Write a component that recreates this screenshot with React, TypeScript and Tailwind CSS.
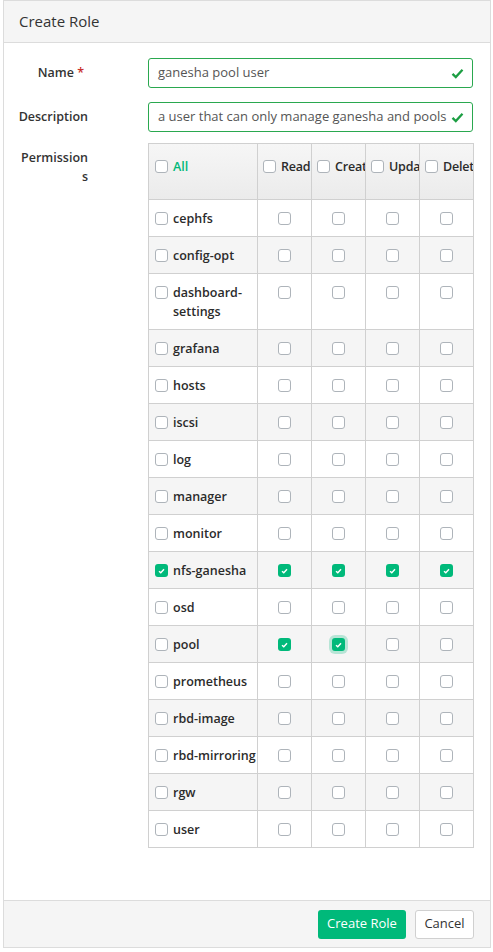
import React from "react";

type Perm = {
  name: string;
  all: boolean;
  read: boolean;
  create: boolean;
  update: boolean;
  del: boolean;
  focus?: boolean;
};

const scopes: Perm[] = [
  { name: "cephfs", all: false, read: false, create: false, update: false, del: false },
  { name: "config-opt", all: false, read: false, create: false, update: false, del: false },
  { name: "dashboard-settings", all: false, read: false, create: false, update: false, del: false },
  { name: "grafana", all: false, read: false, create: false, update: false, del: false },
  { name: "hosts", all: false, read: false, create: false, update: false, del: false },
  { name: "iscsi", all: false, read: false, create: false, update: false, del: false },
  { name: "log", all: false, read: false, create: false, update: false, del: false },
  { name: "manager", all: false, read: false, create: false, update: false, del: false },
  { name: "monitor", all: false, read: false, create: false, update: false, del: false },
  { name: "nfs-ganesha", all: true, read: true, create: true, update: true, del: true },
  { name: "osd", all: false, read: false, create: false, update: false, del: false },
  { name: "pool", all: false, read: true, create: true, update: false, del: false, focus: true },
  { name: "prometheus", all: false, read: false, create: false, update: false, del: false },
  { name: "rbd-image", all: false, read: false, create: false, update: false, del: false },
  { name: "rbd-mirroring", all: false, read: false, create: false, update: false, del: false },
  { name: "rgw", all: false, read: false, create: false, update: false, del: false },
  { name: "user", all: false, read: false, create: false, update: false, del: false },
];

function Box({ checked, focus }: { checked?: boolean; focus?: boolean }) {
  if (checked) {
    return (
      <span
        className={
          "flex h-[13px] w-[13px] shrink-0 items-center justify-center rounded-[3px] bg-[#00b97a] " +
          (focus ? "shadow-[0_0_0_3px_rgba(0,185,122,0.25)]" : "")
        }
      >
        <svg width="7" height="6" viewBox="0 0 7 6">
          <path d="M1 3.2 L2.8 4.8 L6 1.2" fill="none" stroke="#fff" strokeWidth="1.4" />
        </svg>
      </span>
    );
  }
  return <span className="block h-[13px] w-[13px] shrink-0 rounded-[3px] border border-[#aeb4ba] bg-white" />;
}

function ValidCheck() {
  return (
    <svg width="13" height="11" viewBox="0 0 13 11" className="shrink-0">
      <path d="M1.5 5.8 L4.8 9 L11.5 1.8" fill="none" stroke="#1c9e43" strokeWidth="2.3" />
    </svg>
  );
}

export default function App() {
  const cols = ["Read", "Create", "Update", "Delete"];
  return (
    <div className="min-h-[952px] bg-white px-[3px]" style={{ fontFamily: '"Open Sans", "Liberation Sans", sans-serif' }}>
      <div className="flex h-[948px] w-[488px] flex-col border border-[#dcdcdc]">
        <div className="flex h-[42px] shrink-0 items-center border-b border-[#dcdcdc] bg-[#f5f5f5] px-[15px] text-[15px] text-[#333]">
          Create Role
        </div>

        <div className="flex flex-1 flex-col pt-[15px]">
          <div className="flex items-center">
            <div className="w-[84px] pr-[4px] text-right text-[12.5px] font-semibold text-[#333]">
              Name <span className="text-[#c9302c]">*</span>
            </div>
            <div className="ml-[60px] flex h-[30px] w-[325px] items-center justify-between rounded-[3px] border border-[#2aa84f] pl-[9px] pr-[8px] text-[13px] text-[#555]">
              <span>ganesha pool user</span>
              <ValidCheck />
            </div>
          </div>

          <div className="mt-[14px] flex items-center">
            <div className="w-[84px] text-right text-[12.5px] font-semibold text-[#333]">Description</div>
            <div className="ml-[60px] flex h-[30px] w-[325px] items-center justify-between rounded-[3px] border border-[#2aa84f] pl-[9px] pr-[8px] text-[13px] text-[#555]">
              <span className="whitespace-nowrap">a user that can only manage ganesha and pools</span>
              <ValidCheck />
            </div>
          </div>

          <div className="mt-[11px] flex items-start">
            <div className="w-[84px] pt-[5px] text-right text-[12.5px] font-semibold leading-[19px] text-[#333]">
              Permission
              <br />s
            </div>
            <table className="ml-[60px] w-[325px] table-fixed border-collapse text-[12.5px] font-semibold leading-[19px] text-[#2b2b2b]">
              <colgroup>
                <col className="w-[109px]" />
                <col className="w-[54px]" />
                <col className="w-[54px]" />
                <col className="w-[54px]" />
                <col className="w-[54px]" />
              </colgroup>
              <thead>
                <tr className="h-[56px] bg-gradient-to-b from-[#f6f6f6] to-[#ebebeb]">
                  <th className="border border-[#d0d0d0] px-[6px] pb-[11px] text-left font-semibold">
                    <div className="flex items-center gap-[5px] text-[#00b97a]">
                      <Box /> All
                    </div>
                  </th>
                  {cols.map((c) => (
                    <th key={c} className="overflow-hidden border border-[#d0d0d0] pb-[11px] pl-[5px] pr-0 text-left font-semibold">
                      <div className="flex items-center gap-[5px] overflow-hidden whitespace-nowrap tracking-[-0.2px]">
                        <Box /> {c}
                      </div>
                    </th>
                  ))}
                </tr>
              </thead>
              <tbody>
                {scopes.map((s, i) => (
                  <tr key={s.name} className={i % 2 === 1 ? "bg-[#f5f5f5]" : "bg-white"}>
                    <td className="border border-[#d0d0d0] px-[6px] pb-[8px] pt-[9px] align-top">
                      <div className="flex items-start gap-[5px]">
                        <div className="flex h-[19px] items-center">
                          <Box checked={s.all} />
                        </div>
                        <div className="whitespace-nowrap">
                          {s.name === "dashboard-settings" ? <>dashboard-<br />settings</> : s.name}
                        </div>
                      </div>
                    </td>
                    {[s.read, s.create, s.update, s.del].map((v, j) => (
                      <td key={j} className="border border-[#d0d0d0] pb-[8px] pt-[9px] align-top">
                        <div className="flex h-[19px] items-center justify-center">
                          <Box checked={v} focus={s.focus && j === 1} />
                        </div>
                      </td>
                    ))}
                  </tr>
                ))}
              </tbody>
            </table>
          </div>
        </div>

        <div className="flex h-[47px] shrink-0 items-center justify-end gap-[9px] border-t border-[#dcdcdc] bg-[#f5f5f5] pr-[16px]">
          <button className="h-[29px] w-[88px] rounded-[3px] bg-[#00b97a] text-[13px] text-white">Create Role</button>
          <button className="h-[29px] w-[59px] rounded-[3px] border border-[#d0d0d0] bg-white text-[13px] text-[#333]">Cancel</button>
        </div>
      </div>
    </div>
  );
}
